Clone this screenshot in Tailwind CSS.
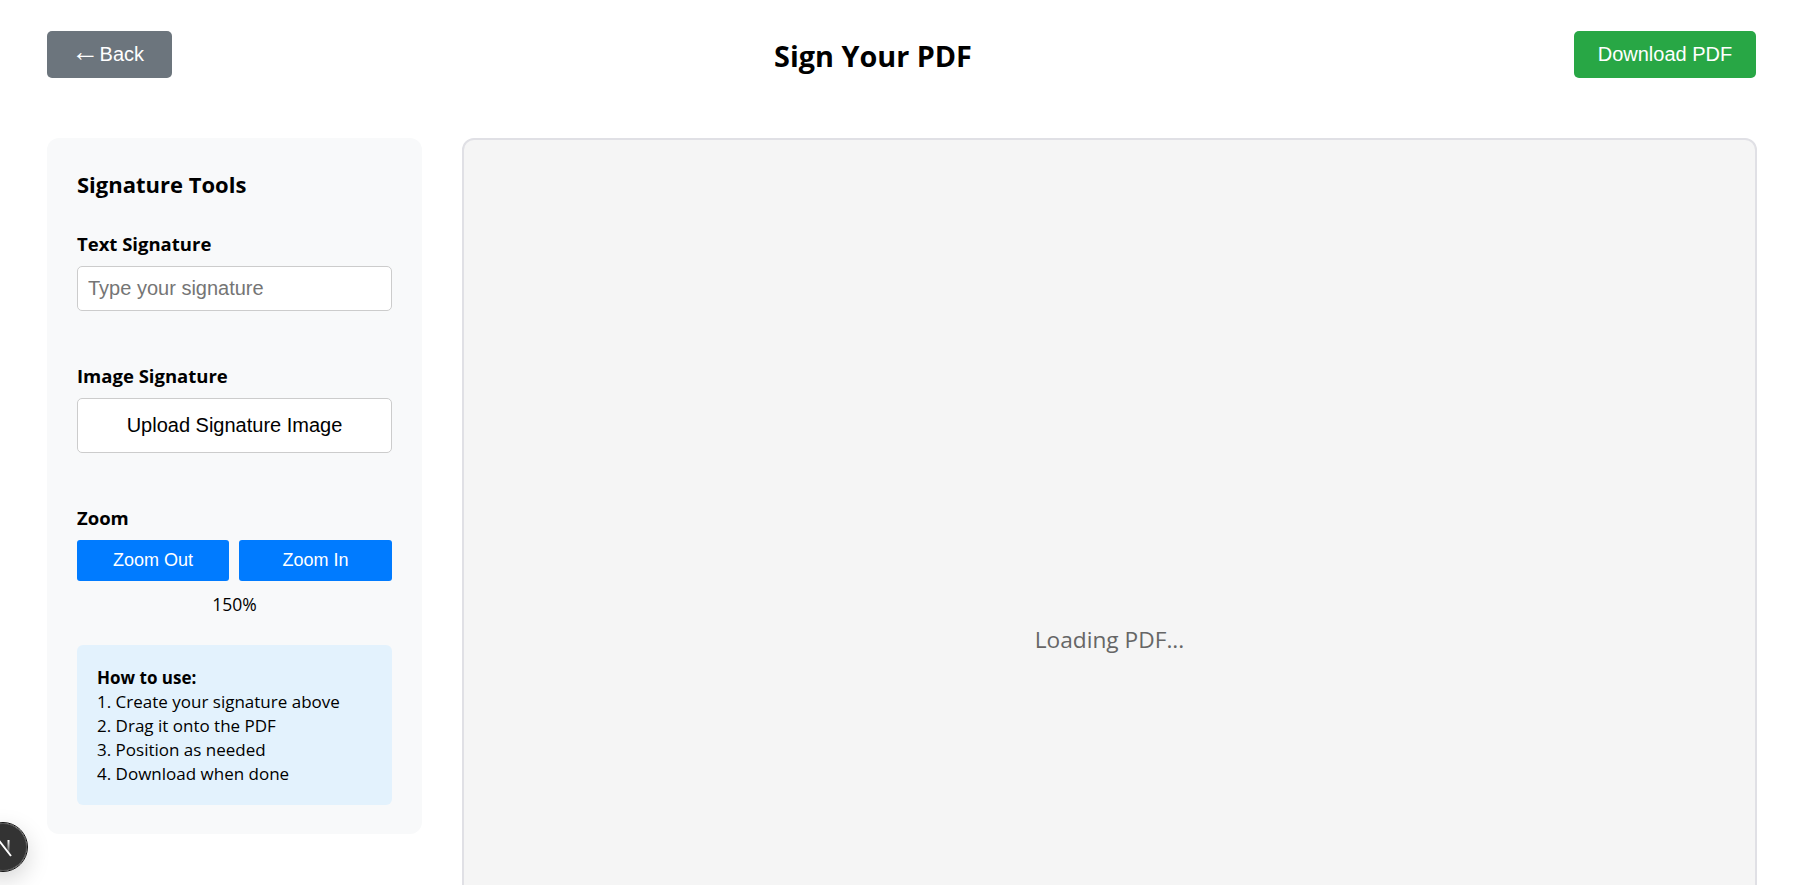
<!DOCTYPE html>
<html lang="en">
  <head>
    <meta charset="UTF-8" />
    <meta name="viewport" content="width=device-width, initial-scale=1.0" />
    <title>Sign Your PDF</title>
    <script src="https://cdn.jsdelivr.net/npm/@tailwindcss/browser@4"></script>
  </head>

  <body class="bg-white h-screen overflow-hidden text-black font-['Open_Sans',sans-serif]">
    <div class="pl-[47px] pr-[41px] pt-[31px]">
      <!-- Header -->
      <header class="flex items-start justify-between h-[107px]">
        <button class="w-[125px] h-[47px] pb-[2px] pr-[4px] bg-[#6c757d] text-white rounded-[5px] text-[20px] [word-spacing:-5px] font-['Liberation_Sans',sans-serif]"><span class="text-[28px] leading-none">←</span> Back</button>
        <h1 class="text-[28.8px] font-bold leading-[40px] mt-[5px]">Sign Your PDF</h1>
        <button class="w-[182px] h-[47px] pb-[2px] bg-[#28a745] text-white rounded-[5px] text-[20px] font-['Liberation_Sans',sans-serif]">Download PDF</button>
      </header>

      <div class="flex items-start gap-[40px]">
        <!-- Tools panel -->
        <aside class="w-[375px] shrink-0 h-[696px] bg-[#f8f9fa] rounded-[12px] px-[30px] pt-[32px]">
          <h2 class="text-[22px] font-bold leading-[28px] mb-[34px]">Signature Tools</h2>

          <label class="block text-[18.5px] font-bold leading-[24px] mb-[10px]">Text Signature</label>
          <input
            type="text"
            placeholder="Type your signature"
            class="block w-full h-[45px] bg-white border border-[#ccc] rounded-[5px] px-[10px] text-[20px] font-['Liberation_Sans',sans-serif] placeholder:text-[#757575] mb-[53px]"
          />

          <label class="block text-[18.5px] font-bold leading-[24px] mb-[10px]">Image Signature</label>
          <button class="block w-full h-[55px] pb-[2px] bg-white border border-[#ccc] rounded-[5px] text-[20px] font-['Liberation_Sans',sans-serif] mb-[53px]">Upload Signature Image</button>

          <label class="block text-[18.5px] font-bold leading-[24px] mb-[10px]">Zoom</label>
          <div class="flex gap-[10px]">
            <button class="w-[152px] h-[41px] bg-[#007bff] text-white rounded-[3px] text-[18px] font-['Liberation_Sans',sans-serif]">Zoom Out</button>
            <button class="flex-1 h-[41px] bg-[#007bff] text-white rounded-[3px] text-[18px] font-['Liberation_Sans',sans-serif]">Zoom In</button>
          </div>
          <p class="text-center text-[17.5px] leading-[22px] mt-[12px] mb-[30px]">150%</p>

          <!-- How to use -->
          <div class="bg-[#e3f2fd] rounded-[6px] h-[160px] px-[20px] pt-[21px] text-[17px] leading-[24px]">
            <strong class="font-bold">How to use:</strong><br />
            1. Create your signature above<br />
            2. Drag it onto the PDF<br />
            3. Position as needed<br />
            4. Download when done
          </div>
        </aside>

        <!-- PDF area -->
        <main class="flex-1 -mr-px h-[1004px] bg-[#f5f5f5] border-2 border-[#e0e0e5] rounded-[12px] flex items-center justify-center">
          <p class="text-[22.7px] text-[#666]">Loading PDF...</p>
        </main>
      </div>
    </div>

    <!-- Next.js dev badge -->
    <div class="fixed left-[-21px] top-[823px] w-[48px] h-[48px] rounded-full bg-[#333] border border-[#555] outline outline-[#111] shadow-[0_8px_24px_rgba(0,0,0,0.18)] flex items-center justify-center">
      <svg width="30" height="30" viewBox="0 0 30 30" fill="none">
        <defs>
          <linearGradient id="stem" x1="0" y1="8" x2="0" y2="21" gradientUnits="userSpaceOnUse">
            <stop offset="0" stop-color="#fff" />
            <stop offset="1" stop-color="#fff" stop-opacity="0.1" />
          </linearGradient>
        </defs>
        <path d="M9 22V8h1.500L23 24" stroke="white" stroke-width="2" />
        <path d="M20.500 8v13" stroke="url(#stem)" stroke-width="2" />
      </svg>
    </div>
  </body>
</html>
